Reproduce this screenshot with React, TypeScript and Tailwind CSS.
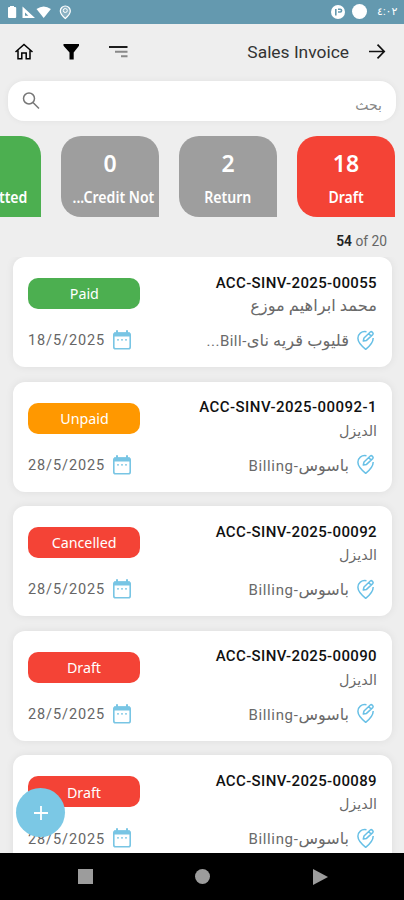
import type { ReactNode } from "react"

type Invoice = {
  id: string
  idClass: string
  customer: string
  customerClass: string
  status: string
  color: string
  date: string
  place: ReactNode
}

const basus = (
  <>
    <span className="tracking-[0.650px]">Billing-</span>
    <bdi className="text-[16px]">باسوس</bdi>
  </>
)

const invoices: Invoice[] = [
  {
    id: "ACC-SINV-2025-00055",
    idClass: "tracking-[0.360px]",
    customer: "محمد ابراهيم موزع",
    customerClass: "text-[16.300px]",
    status: "Paid",
    color: "bg-[#4caf50]",
    date: "18/5/2025",
    place: (
      <>
        <span className="tracking-[0.500px]">...Bill-</span>
        <bdi className="text-[16.300px]">قليوب قريه ناى</bdi>
      </>
    ),
  },
  { id: "ACC-SINV-2025-00092-1", idClass: "tracking-[0.460px]", customer: "الديزل", customerClass: "text-[14.300px]", status: "Unpaid", color: "bg-[#ff9800]", date: "28/5/2025", place: basus },
  { id: "ACC-SINV-2025-00092", idClass: "tracking-[0.360px]", customer: "الديزل", customerClass: "text-[14.300px]", status: "Cancelled", color: "bg-[#f44336]", date: "28/5/2025", place: basus },
  { id: "ACC-SINV-2025-00090", idClass: "tracking-[0.360px]", customer: "الديزل", customerClass: "text-[14.300px]", status: "Draft", color: "bg-[#f44336]", date: "28/5/2025", place: basus },
  { id: "ACC-SINV-2025-00089", idClass: "tracking-[0.360px]", customer: "الديزل", customerClass: "text-[14.300px]", status: "Draft", color: "bg-[#f44336]", date: "28/5/2025", place: basus },
]

const tabs = [
  { count: "", label: "Submitted", color: "bg-[#4caf50]" },
  { count: "0", label: "...Credit Not", color: "bg-[#9e9e9e]", labelClass: "pl-[7px]" },
  { count: "2", label: "Return", color: "bg-[#9e9e9e]" },
  { count: "18", label: "Draft", color: "bg-[#f44336]" },
]

function StatusBar() {
  return (
    <div className="flex h-[23.500px] shrink-0 items-center justify-between bg-[#6499af] pl-[7px] pr-[7px] text-white">
      <svg width="66" height="16" viewBox="0 0 66 16" fill="currentColor">
        <path d="M3 2h4v1h1.200q1 0 1 1v9q0 1-1 1H2q-1 0-1-1V4q0-1 1-1h1z" />
        <path d="M15.500 2.500 28 14H15.500zM18 8.500v3.200h3.400z" fillRule="evenodd" />
        <path d="M29.500 5q7.200-5 14.400 0L36.700 14z" />
        <path d="M58.300 2a5 5 0 0 0-5 5c0 3.200 5 7.500 5 7.500s5-4.300 5-7.500a5 5 0 0 0-5-5z" fillOpacity=".25" stroke="currentColor" strokeWidth="1.200" />
        <circle cx="58.300" cy="6.500" r="2" fill="none" stroke="currentColor" />
      </svg>
      <div className="flex items-center">
        <svg width="14" height="14" viewBox="0 0 14 14">
          <circle cx="7" cy="7" r="7" fill="#fff" />
          <path d="M4.800 10.500V4M7 4.200h2.200a1.300 1.300 0 0 1 0 2.800H7" fill="none" stroke="#6499af" strokeWidth="1.600" />
        </svg>
        <span className="ml-[7px] size-[15px] rounded-full bg-white" />
        <bdi className="ml-[10px] w-[20px] whitespace-nowrap text-right text-[11px]">٤:٠٢</bdi>
      </div>
    </div>
  )
}

function Header() {
  return (
    <header className="flex h-[57.500px] shrink-0 items-center pl-[14px] pr-[18px] text-black">
      <svg width="20" height="20" viewBox="0 0 20 20" fill="none" stroke="currentColor" strokeWidth="1.500">
        <path d="M1.500 10 10 2.500l8.500 7.500M4 8.500v8.300h3.800v-5.800h4.400v5.800H16V8.500" />
      </svg>
      <svg className="ml-[29px]" width="18" height="18" viewBox="0 0 18 18" fill="currentColor">
        <path d="M.500 1H16v1.800L10.700 9.500v7H6.500v-7L.500 2.800z" />
      </svg>
      <svg className="ml-[28px]" width="19" height="18" viewBox="0 0 19 18">
        <path d="M0 4h18.500" stroke="#111" strokeWidth="1.900" />
        <path d="M6 8.700h12.500M12 13.300h6.500" stroke="#888" strokeWidth="1.900" />
      </svg>
      <h1 className="ml-auto pt-px font-[Roboto] text-[17.400px] leading-none text-[#333]">Sales Invoice</h1>
      <svg className="ml-[20px]" width="17" height="18" viewBox="0 0 17 18" fill="none" stroke="#111" strokeWidth="1.700">
        <path d="M0 8.500h15M8.500 1.700l6.700 6.800-6.700 6.800" />
      </svg>
    </header>
  )
}

function CalendarIcon() {
  return (
    <svg width="18" height="20" viewBox="0 0 18 20" className="text-[#78c5e4]">
      <rect x=".8" y="3" width="16.400" height="15.700" rx="1.800" fill="#fff" stroke="currentColor" strokeWidth="1.600" />
      <path d="M1 2.500h16v4H1zM3 .300h2v3H3zM13 .300h2v3h-2z" fill="currentColor" />
      <path d="M4 9.800h2M8 9.800h2M12 9.800h2" stroke="currentColor" strokeWidth="1.300" />
    </svg>
  )
}

function PlaceIcon() {
  return (
    <svg width="18" height="21" viewBox="0 0 18 21" fill="none" stroke="#68c0e6" strokeWidth="1.500" strokeLinejoin="round">
      <path d="M9.500 1.800C4.500.800.900 4 .900 8.300c0 4.500 4 8 7.800 11 3.800-3 7.500-6.500 7.500-11.300" />
      <path d="m6.300 11 .7-3 6.300-6q1-.8 1.900.1l.6.600q.8 1-.1 1.900L9.500 10.400zM11.700 3.600l2.400 2.400" />
    </svg>
  )
}

function InvoiceCard({ invoice }: { invoice: Invoice }) {
  return (
    <article className="flex h-[110px] shrink-0 justify-between rounded-[12px] bg-white pl-[15px] pr-[15px] shadow-[0_0_9px_rgba(0,0,0,0.07)]">
      <div className="flex flex-col items-start pt-[21px]">
        <span className={`flex h-[31px] w-[112px] items-center justify-center rounded-[10px] font-['Noto_Sans'] text-[15px] text-white ${invoice.color}`}>
          <span className="origin-center scale-x-[0.95]">{invoice.status}</span>
        </span>
        <div className="mt-[20px] flex h-[22px] items-center gap-[8px]">
          <span className="w-[77px] whitespace-nowrap pt-[2px] text-[14.500px] tracking-[0.900px] text-[#666]">{invoice.date}</span>
          <CalendarIcon />
        </div>
      </div>
      <div className="flex flex-col items-end">
        <span className={`mt-[14.500px] whitespace-nowrap text-[15px] font-medium leading-[22px] text-[#111] ${invoice.idClass}`}>{invoice.id}</span>
        <bdi className={`mt-[1.500px] h-[22px] whitespace-nowrap leading-[22px] text-[#6a6a6a] ${invoice.customerClass}`}>{invoice.customer}</bdi>
        <div className="mt-[12px] flex h-[22px] items-center gap-[8px] pr-[2px]">
          <span className="whitespace-nowrap pt-[2px] text-[15px] leading-[22px] text-[#6a6a6a]">{invoice.place}</span>
          <PlaceIcon />
        </div>
      </div>
    </article>
  )
}

export default function App() {
  return (
    <div className="relative flex h-[900px] w-[404px] flex-col overflow-hidden bg-[#eeeeee] font-[Roboto,'DejaVu_Sans',sans-serif]">
      <StatusBar />
      <Header />

      {/* Search */}
      <div className="mx-[8px] flex h-[40px] shrink-0 items-center justify-between rounded-[16px] bg-white pl-[14px] pr-[14px] shadow-[0_0_6px_rgba(0,0,0,0.06)]">
        <svg width="18" height="18" viewBox="0 0 18 18" fill="none" stroke="#777" strokeWidth="1.500">
          <circle cx="7" cy="6.500" r="5.500" />
          <path d="m11 10.500 6 6" />
        </svg>
        <span className="pt-[8px] text-[14px] leading-none text-[#888]">بحث</span>
      </div>

      {/* Status tabs */}
      <div className="mt-[15px] flex h-[81px] shrink-0 justify-end gap-[20px] pr-[9px]">
        {tabs.map((tab) => (
          <div key={tab.label} className={`flex w-[98px] shrink-0 flex-col items-center rounded-[20px] rounded-br-none font-['Noto_Sans'] font-semibold text-white ${tab.color}`}>
            <span className="mt-[12px] h-[30px] text-[23px] leading-[30px]">{tab.count}</span>
            <span className={`mt-[9px] whitespace-nowrap text-[16px] leading-[20px] ${tab.labelClass ?? ""}`}>
              <span className="inline-block scale-x-[0.88]">{tab.label}</span>
            </span>
          </div>
        ))}
      </div>

      <p className="mt-[14px] shrink-0 pr-[17px] text-right text-[13.800px] leading-[20px] text-[#666]">
        <b className="font-semibold text-[#222]">54</b> of 20
      </p>

      {/* Invoices */}
      <main className="mt-[6px] flex min-h-0 flex-1 flex-col gap-[14.600px] overflow-hidden pl-[13px] pr-[12px]">
        {invoices.map((invoice) => (
          <InvoiceCard key={invoice.id} invoice={invoice} />
        ))}
      </main>

      <button className="absolute left-[16px] top-[788px] flex size-[49px] items-center justify-center rounded-full bg-[#7bc8e5] text-white">
        <svg width="14" height="14" viewBox="0 0 14 14" stroke="currentColor" strokeWidth="1.800">
          <path d="M7 0v14M0 7h14" />
        </svg>
      </button>

      {/* Android navigation */}
      <nav className="flex h-[47px] shrink-0 items-center bg-black pl-[78px] text-[#9c9c9c]">
        <span className="size-[15px] bg-current" />
        <span className="ml-[102px] size-[15px] rounded-full bg-current" />
        <svg className="ml-[103px]" width="15" height="16" viewBox="0 0 15 16" fill="currentColor">
          <path d="M0 0v16l15-8z" />
        </svg>
      </nav>
    </div>
  )
}
